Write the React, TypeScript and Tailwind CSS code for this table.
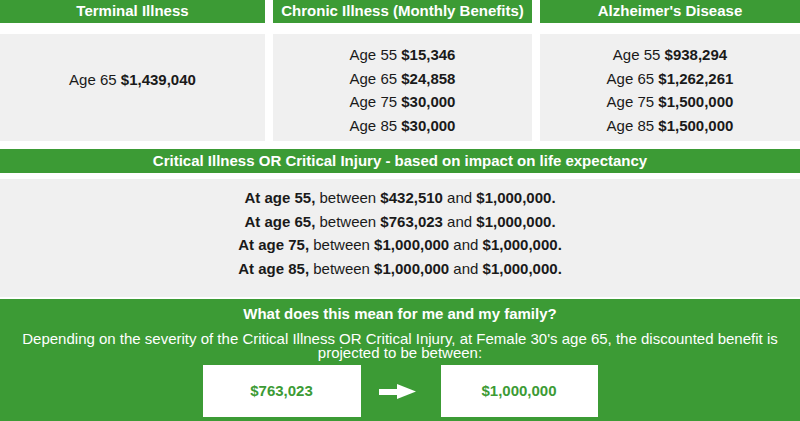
import React from "react";

const ages = [
  { age: 55, chronic: "$15,346", alz: "$938,294", low: "$432,510", high: "$1,000,000" },
  { age: 65, chronic: "$24,858", alz: "$1,262,261", low: "$763,023", high: "$1,000,000" },
  { age: 75, chronic: "$30,000", alz: "$1,500,000", low: "$1,000,000", high: "$1,000,000" },
  { age: 85, chronic: "$30,000", alz: "$1,500,000", low: "$1,000,000", high: "$1,000,000" },
];

function Header({ children }: { children: React.ReactNode }) {
  return (
    <div className="h-[23px] bg-[#3c9b35] text-white font-bold text-[15px] flex items-center justify-center">
      {children}
    </div>
  );
}

export default function App() {
  return (
    <div className="w-[800px] h-[421px] overflow-hidden bg-white flex flex-col font-['Liberation_Sans',Arial,sans-serif] text-[#1a1a1a]">
      {/* Benefit columns */}
      <div className="grid grid-cols-[265px_259px_1fr] gap-x-2 gap-y-[11px]">
        <Header>Terminal Illness</Header>
        <Header>Chronic Illness (Monthly Benefits)</Header>
        <Header>Alzheimer&apos;s Disease</Header>

        <div className="h-[107px] bg-[#f0f0f0] pt-[34px] text-center text-[15px] leading-[23.5px]">
          Age 65 <span className="font-bold">$1,439,040</span>
        </div>
        <div className="h-[107px] bg-[#f0f0f0] pt-[9px] text-center text-[15px] leading-[23.5px]">
          {ages.map((a) => (
            <div key={a.age}>
              Age {a.age} <span className="font-bold">{a.chronic}</span>
            </div>
          ))}
        </div>
        <div className="h-[107px] bg-[#f0f0f0] pt-[9px] text-center text-[15px] leading-[23.5px]">
          {ages.map((a) => (
            <div key={a.age}>
              Age {a.age} <span className="font-bold">{a.alz}</span>
            </div>
          ))}
        </div>
      </div>

      {/* Critical illness */}
      <div className="mt-[8px] h-[24px] bg-[#3c9b35] text-white font-bold text-[15px] flex items-center justify-center">
        Critical Illness OR Critical Injury - based on impact on life expectancy
      </div>
      <div className="mt-[6px] h-[118px] bg-[#f0f0f0] pt-[7px] text-center text-[15px] leading-[23.5px]">
        {ages.map((a) => (
          <div key={a.age}>
            <span className="font-bold">At age {a.age},</span> between{" "}
            <span className="font-bold">{a.low}</span> and{" "}
            <span className="font-bold">{a.high}.</span>
          </div>
        ))}
      </div>

      {/* Summary */}
      <div className="mt-[2px] flex-1 bg-[#3c9b35] text-white text-center pt-[5px]">
        <div className="font-bold text-[15px] leading-[20px]">What does this mean for me and my family?</div>
        <p className="mt-[8px] text-[15px] leading-[14px] px-4">
          Depending on the severity of the Critical Illness OR Critical Injury, at Female 30&apos;s age 65, the discounted benefit is projected to be between:
        </p>
        <div className="mt-[5px] flex items-center justify-center">
          <div className="w-[158px] h-[52px] bg-white flex items-center justify-center font-bold text-[15px] text-[#3c9b35]">
            $763,023
          </div>
          <svg className="ml-[18px] mr-[25px]" width="37" height="15" viewBox="0 0 37 15">
            <rect x="0" y="5" width="19" height="6" fill="white" />
            <polygon points="18,0 37,7.5 18,15" fill="white" />
          </svg>
          <div className="w-[157px] h-[52px] bg-white flex items-center justify-center font-bold text-[15px] text-[#3c9b35]">
            $1,000,000
          </div>
        </div>
      </div>
    </div>
  );
}
